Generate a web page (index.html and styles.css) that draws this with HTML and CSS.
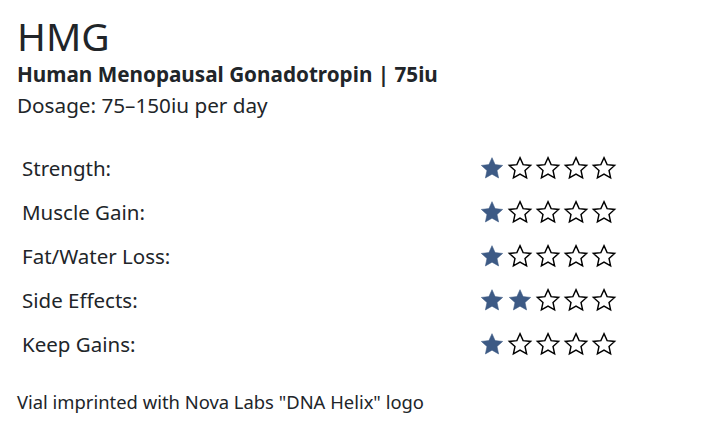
FILE: index.html
```html
<!DOCTYPE html>
<html>
<head>
<meta charset="utf-8">
<link rel="stylesheet" href="styles.css">
</head>
<body>
<svg width="0" height="0" class="defs">
  <defs>
    <path id="star" d="M10 0.6 L12.82 6.92 L19.7 7.65 L14.56 12.28 L16 19.05 L10 15.6 L4 19.05 L5.44 12.28 L0.3 7.65 L7.18 6.92 Z"/>
  </defs>
</svg>
<main class="page">
  <h1 class="title">HMG</h1>
  <h2 class="subtitle">Human Menopausal Gonadotropin | 75iu</h2>
  <p class="dosage">Dosage: 75–150iu per day</p>
  <div class="ratings">
    <div class="row"><span class="label">Strength:</span><span class="stars"><svg class="star on" viewBox="0 0 20 20"><use href="#star"/></svg><svg class="star" viewBox="0 0 20 20"><use href="#star"/></svg><svg class="star" viewBox="0 0 20 20"><use href="#star"/></svg><svg class="star" viewBox="0 0 20 20"><use href="#star"/></svg><svg class="star" viewBox="0 0 20 20"><use href="#star"/></svg></span></div>
    <div class="row"><span class="label">Muscle Gain:</span><span class="stars"><svg class="star on" viewBox="0 0 20 20"><use href="#star"/></svg><svg class="star" viewBox="0 0 20 20"><use href="#star"/></svg><svg class="star" viewBox="0 0 20 20"><use href="#star"/></svg><svg class="star" viewBox="0 0 20 20"><use href="#star"/></svg><svg class="star" viewBox="0 0 20 20"><use href="#star"/></svg></span></div>
    <div class="row"><span class="label">Fat/Water Loss:</span><span class="stars"><svg class="star on" viewBox="0 0 20 20"><use href="#star"/></svg><svg class="star" viewBox="0 0 20 20"><use href="#star"/></svg><svg class="star" viewBox="0 0 20 20"><use href="#star"/></svg><svg class="star" viewBox="0 0 20 20"><use href="#star"/></svg><svg class="star" viewBox="0 0 20 20"><use href="#star"/></svg></span></div>
    <div class="row"><span class="label">Side Effects:</span><span class="stars"><svg class="star on" viewBox="0 0 20 20"><use href="#star"/></svg><svg class="star on" viewBox="0 0 20 20"><use href="#star"/></svg><svg class="star" viewBox="0 0 20 20"><use href="#star"/></svg><svg class="star" viewBox="0 0 20 20"><use href="#star"/></svg><svg class="star" viewBox="0 0 20 20"><use href="#star"/></svg></span></div>
    <div class="row"><span class="label">Keep Gains:</span><span class="stars"><svg class="star on" viewBox="0 0 20 20"><use href="#star"/></svg><svg class="star" viewBox="0 0 20 20"><use href="#star"/></svg><svg class="star" viewBox="0 0 20 20"><use href="#star"/></svg><svg class="star" viewBox="0 0 20 20"><use href="#star"/></svg><svg class="star" viewBox="0 0 20 20"><use href="#star"/></svg></span></div>
  </div>
  <p class="note">Vial imprinted with Nova Labs "DNA Helix" logo</p>
</main>
</body>
</html>
```
FILE: styles.css
```css
html, body {
  margin: 0;
  background: #fff;
}
body {
  font-family: "Noto Sans", "Open Sans", sans-serif;
  color: #212529;
}
.defs {
  position: absolute;
}
.page {
  padding: 12px 17px 0;
}
.title {
  margin: 0;
  font-size: 39px;
  font-weight: 400;
  line-height: 48px;
}
.subtitle {
  margin: 2px 0 0;
  font-size: 20.7px;
  font-weight: 700;
  line-height: 24px;
}
.dosage {
  margin: 4px 0 0;
  font-size: 20.7px;
  line-height: 30px;
}
.ratings {
  margin-top: 26px;
  display: flex;
  flex-direction: column;
}
.row {
  display: grid;
  grid-template-columns: 459px auto;
  align-items: center;
  height: 44px;
  padding-left: 5px;
}
.label {
  font-size: 20.5px;
  line-height: 24px;
}
.stars {
  display: flex;
  gap: 6px;
}
.star {
  width: 22px;
  height: 22px;
  fill: #fff;
  stroke: #000;
  stroke-width: 1.3;
  stroke-linejoin: miter;
  overflow: visible;
}
.star.on {
  fill: #3d5a85;
  stroke: #3d5a85;
  stroke-width: 0.5;
}
.note {
  margin: 22px 0 0;
  font-size: 18.4px;
  line-height: 27px;
}
```
